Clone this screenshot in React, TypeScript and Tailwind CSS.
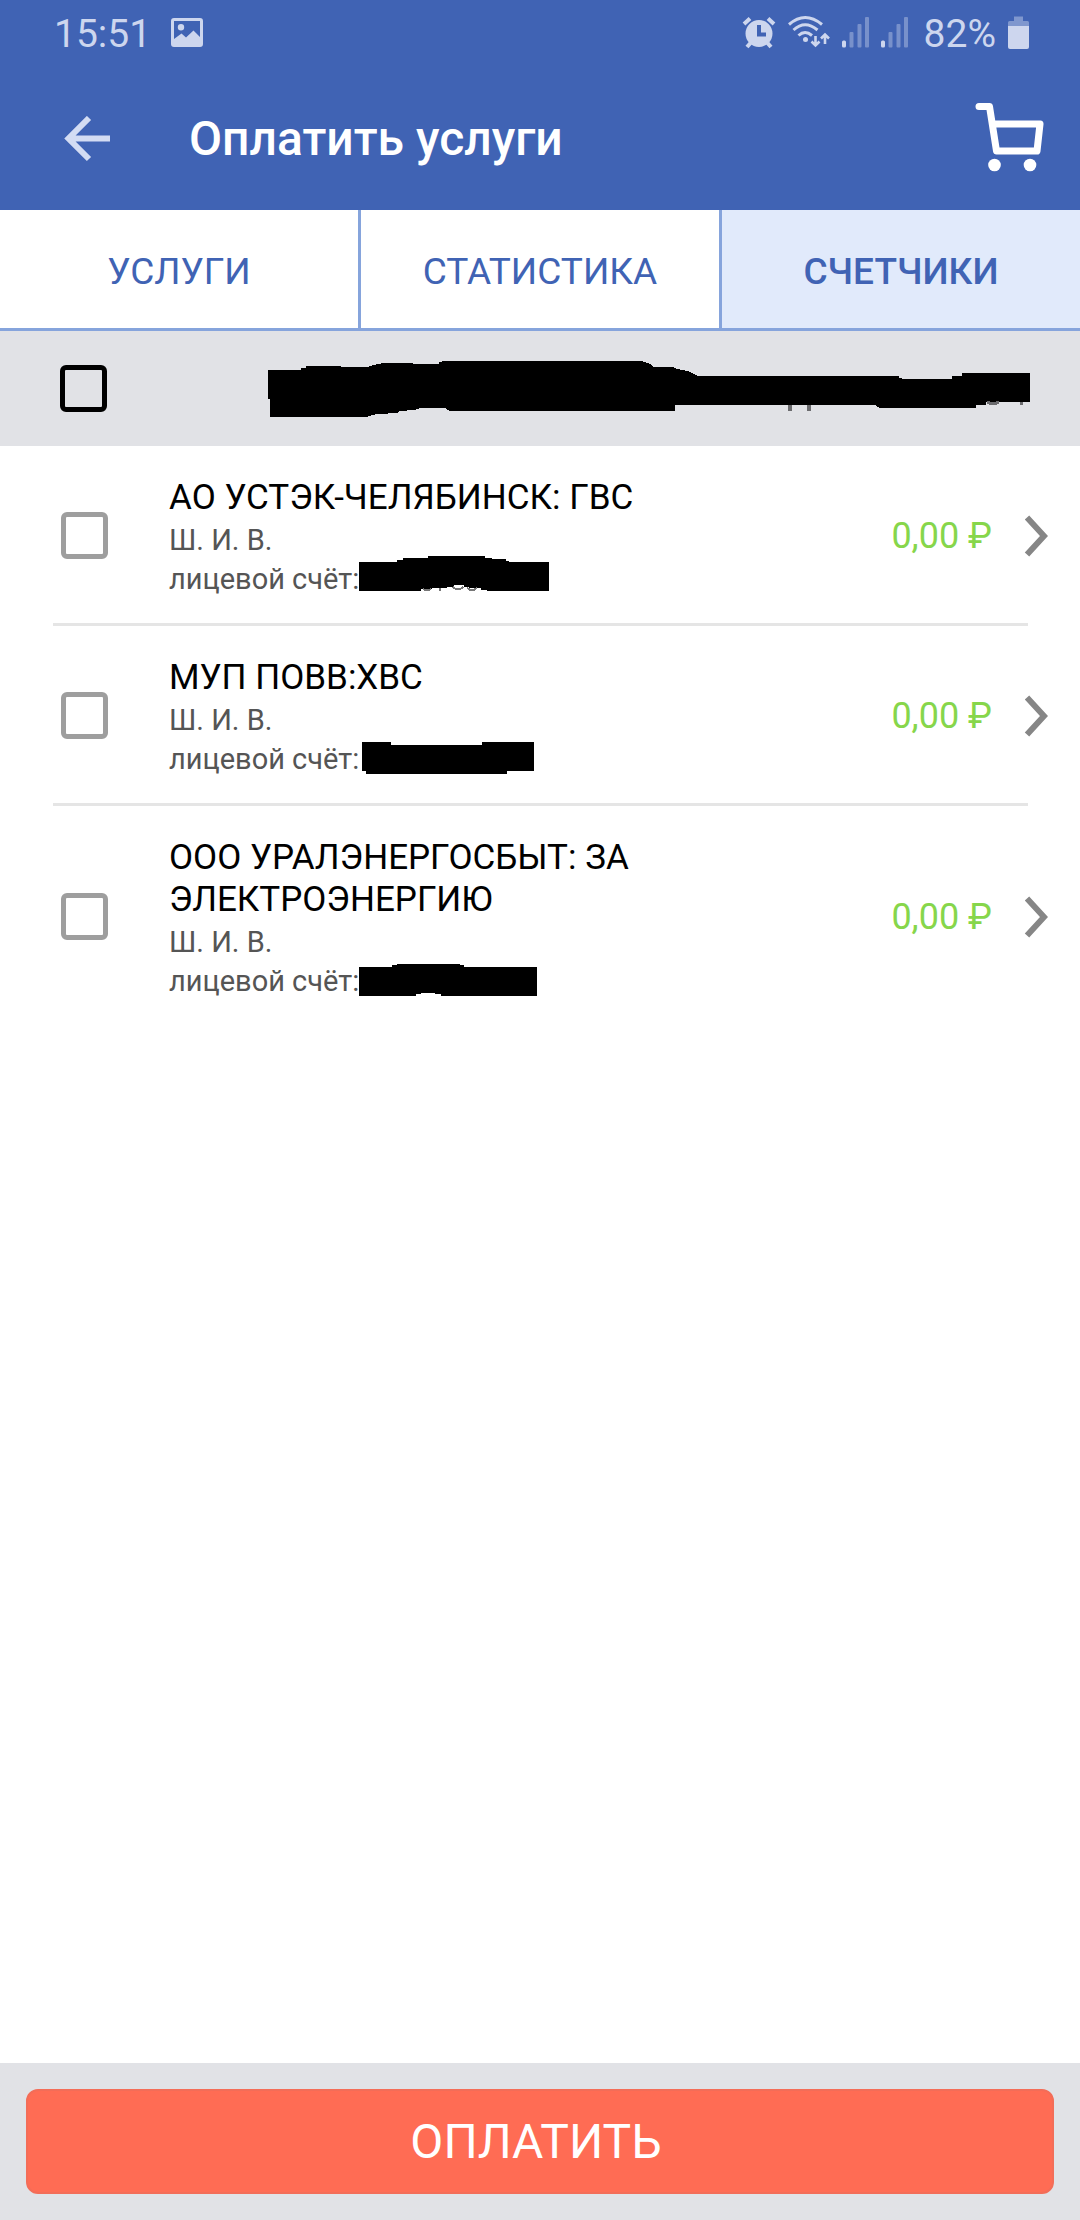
import { useState } from 'react';

type Account = {
  title: string;
  owner: string;
  amount: string;
  mask: string;
  scraps?: string;
};

const accounts: Account[] = [
  {
    title: 'АО УСТЭК-ЧЕЛЯБИНСК: ГВС',
    owner: 'Ш. И. В.',
    amount: '0,00 ₽',
    mask: 'M0 6H38V4H44V2H69V0H126V2H133V3H147V5H150V6H190V35H128V34H122V32H110V31H105V29H95V31H88V32H73V33H62V35H0Z',
    scraps: 'M64 33q4 3 8 0M81 32v3M94 31q5 5 10 0M108 32q5 4 10 0',
  },
  {
    title: 'МУП ПОВВ:ХВС',
    owner: 'Ш. И. В.',
    amount: '0,00 ₽',
    mask: 'M3 6H32V9H123V6H175V35H148V38H7V35H3Z',
  },
  {
    title: 'ООО УРАЛЭНЕРГОСБЫТ: ЗА ЭЛЕКТРОЭНЕРГИЮ',
    owner: 'Ш. И. В.',
    amount: '0,00 ₽',
    mask: 'M0 9H33V7H38V6H101V7H105V9H178V38H82V36H76V35H62V36H57V38H0Z',
  },
];

const tabs = ['УСЛУГИ', 'СТАТИСТИКА', 'СЧЕТЧИКИ'];

function StatusBar() {
  return (
    <div className="flex h-[68px] items-center pl-[54px] pr-[50px] text-[39px] leading-none text-[#cdd6ee]">
      <span>15:51</span>
      <svg className="ml-5 h-10 w-8" viewBox="0 0 32 40" aria-hidden="true">
        <path
          fill="currentColor"
          fillRule="evenodd"
          d="M3 4H29a3 3 0 0 1 3 3V30a3 3 0 0 1-3 3H3a3 3 0 0 1-3-3V7a3 3 0 0 1 3-3ZM3 7V25L10.500 19.500L15 23.500L22.500 16.500L29 23V7ZM10 10a3.200 3.200 0 1 1 0 6.400a3.200 3.200 0 0 1 0-6.400Z"
        />
      </svg>
      <svg className="ml-auto h-10 w-[34px]" viewBox="740 14 34 40" aria-hidden="true">
        <path
          fill="currentColor"
          fillRule="evenodd"
          d="M757 20a13.500 13.500 0 1 1 0 27a13.500 13.500 0 0 1 0-27ZM755 25V36.500H764V32.500H759V25Z"
        />
        <path
          stroke="currentColor"
          strokeWidth="4"
          fill="none"
          d="M742 24l6-5.500M772 24l-6-5.500M748.500 43l-3.500 4M765.500 43l3.500 4"
        />
      </svg>
      <svg className="ml-3 h-10 w-[42px]" viewBox="786 14 42 40" fill="none" stroke="currentColor" aria-hidden="true">
        <path strokeWidth="3" d="M787 24.500Q803 10.500 820 24.500M791.500 30Q803 19.500 815.500 30M796.500 35.500Q803 29.500 810 35.500" />
        <circle cx="803.500" cy="39.500" r="2.500" fill="currentColor" stroke="none" />
        <path strokeWidth="2.600" d="M813.500 36V45M809.500 41.500l4 4l4-4M823 44V35M819 38.500l4-4l4 4" />
      </svg>
      {[0, 1].map((sim) => (
        <svg key={sim} className="ml-[11px] h-10 w-7" viewBox="838 14 28 40" fill="currentColor" aria-hidden="true">
          <rect x="839" y="40.500" width="4" height="7" rx="1.500" />
          <g opacity=".4">
            <rect x="846.500" y="32" width="4" height="15.500" rx="1" />
            <rect x="854.500" y="24" width="4" height="23.500" rx="1" />
            <rect x="862" y="17" width="4" height="30.500" rx="1" />
          </g>
        </svg>
      ))}
      <span className="ml-4">82%</span>
      <svg className="ml-3 h-10 w-[22px]" viewBox="1006 14 22 40" fill="currentColor" aria-hidden="true">
        <path opacity=".45" d="M1012 16.500H1021V21H1025.500Q1027 21 1027 22.500V26H1006V22.500Q1006 21 1007.500 21H1012Z" />
        <path d="M1006 26H1027V47Q1027 49 1025 49H1008Q1006 49 1006 47Z" />
      </svg>
    </div>
  );
}

function Checkbox({ id, label, tone }: { id: string; label: string; tone: string }) {
  return (
    <input
      id={id}
      type="checkbox"
      aria-label={label}
      className={`size-[47px] shrink-0 appearance-none rounded-md border-5 checked:bg-current ${tone}`}
    />
  );
}

function AccountRow({ account, index, last }: { account: Account; index: number; last: boolean }) {
  const id = `account-${index}`;
  return (
    <li className={`ml-[53px] mr-[52px] pb-6 pt-[31px] ${last ? '' : 'border-b-3 border-[#e5e5e5]'}`}>
      <div className="-mr-5 flex">
        <div className="flex items-center pb-1.5 pl-2">
          <Checkbox id={id} label={account.title} tone="border-[#9e9e9e] text-[#9e9e9e]" />
        </div>
        <label htmlFor={id} className="ml-[61px] block min-w-0 flex-1">
          <span className="block text-[35px] leading-[42px] text-black">{account.title}</span>
          <span className="mt-0.5 block text-[29px] leading-[39px] text-[#555]">{account.owner}</span>
          <span className="block text-[29px] leading-[39px] text-[#555]">
            <span className="relative inline-block">
              лицевой счёт:
              <svg
                className="absolute -top-1 left-full h-10 w-48"
                viewBox="0 0 192 40"
                shapeRendering="crispEdges"
                aria-hidden="true"
              >
                <path d={account.mask} fill="#000" />
                {account.scraps && <path d={account.scraps} fill="none" stroke="#777" strokeWidth="2" />}
              </svg>
            </span>
          </span>
        </label>
        <div className="flex items-center pb-1">
          <span className="ml-6 whitespace-nowrap text-[36px] leading-[42px] text-[#86d64b]">{account.amount}</span>
          <button type="button" aria-label={`Открыть ${account.title}`} className="ml-8">
            <svg className="h-11 w-6" viewBox="0 0 24 44" fill="none" aria-hidden="true">
              <path d="M3 3.500L20 22L3 40.500" stroke="#868686" strokeWidth="6" />
            </svg>
          </button>
        </div>
      </div>
    </li>
  );
}

export default function App() {
  const [active, setActive] = useState(2);

  return (
    <div className="flex min-h-screen flex-col bg-white font-['Roboto','Noto_Sans',sans-serif]">
      <header className="bg-[#4063b4]">
        <StatusBar />
        <div className="flex h-[142px] items-center pl-16 pr-9">
          <button type="button" aria-label="Назад">
            <svg className="size-[46px]" viewBox="0 0 46 46" fill="none" stroke="#d3dcf3" strokeWidth="6" aria-hidden="true">
              <path d="M46 22.500H5M25 2L4.500 22.500L25 43" />
            </svg>
          </button>
          <h1 className="ml-[79px] text-[48px] font-medium leading-none text-white">Оплатить услуги</h1>
          <button type="button" aria-label="Корзина" className="ml-auto pb-1">
            <svg className="size-[70px]" viewBox="0 0 70 70" fill="none" aria-hidden="true">
              <path
                d="M5 4.500H15.500L22.500 49H63L66 22H19"
                stroke="#fff"
                strokeWidth="7"
                strokeLinecap="round"
                strokeLinejoin="round"
              />
              <circle cx="20.500" cy="63" r="6.300" fill="#fff" />
              <circle cx="56" cy="63" r="6.300" fill="#fff" />
            </svg>
          </button>
        </div>
      </header>

      <div role="tablist" className="flex border-b-3 border-[#86a4dc]">
        {tabs.map((tab, i) => (
          <button
            key={tab}
            type="button"
            role="tab"
            aria-selected={active === i}
            onClick={() => setActive(i)}
            className={`h-[118px] flex-1 border-[#86a4dc] pt-1 text-[37px] leading-none text-[#4063b4] ${
              i < tabs.length - 1 ? 'border-r-3' : ''
            } ${active === i ? 'bg-[#e1eafb] font-medium' : ''}`}
          >
            {tab}
          </button>
        ))}
      </div>

      <main className="flex-1">
        <div className="flex h-[115px] items-center bg-[#e1e2e6] pl-[60px] pr-[50px]">
          <Checkbox id="all" label="Выбрать все" tone="border-black text-black" />
          <svg
            className="ml-auto h-14 w-[762px]"
            viewBox="268 361 762 56"
            shapeRendering="crispEdges"
            aria-hidden="true"
          >
            <path
              fill="#000"
              d="M268 370H301V368H306V366H341V367H368L373 365L384 363H413V364H439V362L445 361H642L650 364L653 367H673L677 369L688 371L698 376H899V378L904 379H952V376H962V373H1030V402H986V405H976V408H880L875 405H675V411H450L445 408H420L415 410L399 411L398 413L377 414L366 417H270V399H268Z"
            />
            <path fill="none" stroke="#6b6b6e" strokeWidth="4" d="M790 405V411M809 405V411" />
            <path fill="none" stroke="#6b6b6e" strokeWidth="3" d="M1021.500 402V405M987 402Q993 405 999 402" />
          </svg>
        </div>
        <ul>
          {accounts.map((account, i) => (
            <AccountRow key={account.title} account={account} index={i} last={i === accounts.length - 1} />
          ))}
        </ul>
      </main>

      <footer className="bg-[#e1e2e6] p-[26px]">
        <button
          type="button"
          className="h-[105px] w-full rounded-xl border-2 border-[#f36d58] bg-[#ff6c54] pr-2 text-[48px] leading-none text-white"
        >
          ОПЛАТИТЬ
        </button>
      </footer>
    </div>
  );
}
